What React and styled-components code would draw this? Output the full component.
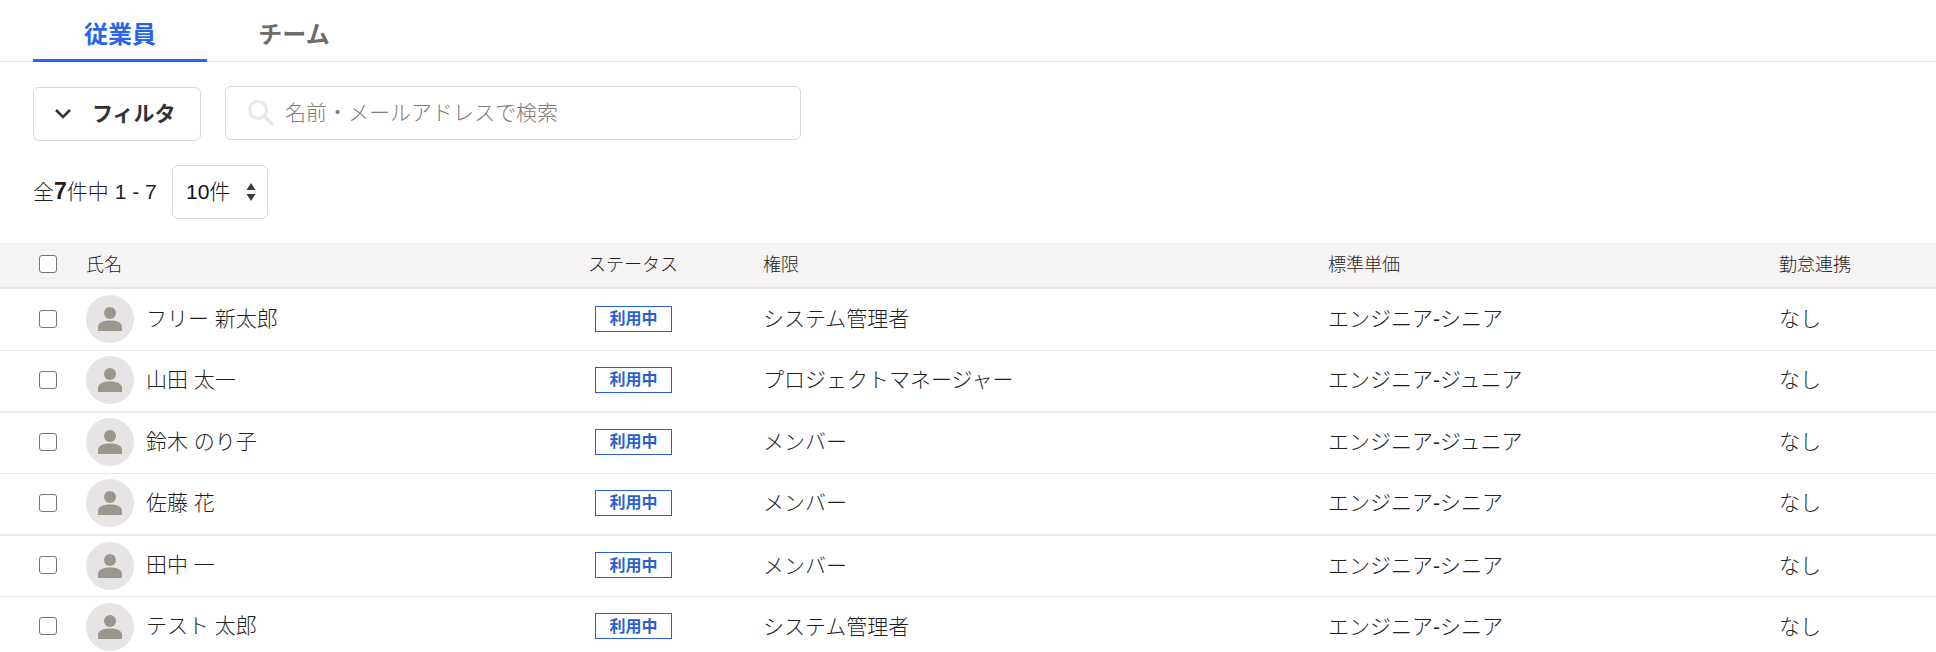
import React from "react";
import styled, { createGlobalStyle } from "styled-components";

const GlobalStyle = createGlobalStyle`
  html, body {
    margin: 0;
    background: #fff;
    overflow: hidden;
  }
  body {
    font-family: "Liberation Sans", "Noto Sans CJK JP", sans-serif;
    font-weight: 300;
    color: #1f1f1f;
  }
`;

const Page = styled.div`
  width: 1936px;
  height: 652px;
  overflow: hidden;
`;

const Tabs = styled.div`
  display: flex;
  height: 61px;
  padding-left: 33px;
  border-bottom: 1px solid #e5e5e5;
`;

const Tab = styled.div`
  width: 174px;
  height: 62px;
  box-sizing: border-box;
  padding-top: 19px;
  text-align: center;
  font-size: 24px;
  line-height: 32px;
  font-weight: 700;
  color: ${(p) => (p.$active ? "#2864f0" : "#6e6b6b")};
  border-bottom: ${(p) => (p.$active ? "3px solid #2864f0" : "none")};
`;

const Toolbar = styled.div`
  display: flex;
  align-items: flex-start;
  gap: 24px;
  padding: 25px 0 0 33px;
`;

const FilterButton = styled.div`
  display: flex;
  align-items: center;
  width: 168px;
  height: 54px;
  padding-left: 20px;
  box-sizing: border-box;
  border: 1px solid #d7d7d7;
  border-radius: 6px;
  font-size: 21px;
  font-weight: 700;
  color: #323232;
  gap: 20px;
`;

const SearchBox = styled.div`
  display: flex;
  align-items: center;
  width: 576px;
  height: 54px;
  margin-top: -1px;
  padding-left: 21px;
  box-sizing: border-box;
  border: 1px solid #d7d7d7;
  border-radius: 6px;
  font-size: 21px;
  color: #7f7c7c;
  gap: 10px;
`;

// CJK fallback sits low in the line box, this pulls the text back up
const Label = styled.span`
  padding-bottom: 4px;
`;

const CountRow = styled.div`
  display: flex;
  align-items: center;
  padding: 24px 0 0 33px;
  height: 54px;
`;

const CountText = styled.div`
  font-size: 21px;
  width: 139px;
  padding-bottom: 4px;
  white-space: nowrap;
  b {
    font-weight: 700;
    font-size: 23px;
  }
`;

const PerPage = styled.div`
  display: flex;
  align-items: center;
  justify-content: space-between;
  width: 96px;
  height: 54px;
  padding: 0 11px 0 13px;
  box-sizing: border-box;
  border: 1px solid #d7d7d7;
  border-radius: 6px;
  font-size: 21px;
  color: #111;
`;

const Table = styled.div`
  margin-top: 24px;
`;

const columns = "86px 418px 259px 565px 451px 157px";

const HeadRow = styled.div`
  display: grid;
  grid-template-columns: ${columns};
  align-items: center;
  height: 46.4px;
  box-sizing: border-box;
  background: #f5f3f4;
  border-bottom: 2px solid #e5e5e5;
  font-size: 18px;
`;

const Row = styled.div`
  display: grid;
  grid-template-columns: ${columns};
  align-items: center;
  height: 61.6px;
  box-sizing: border-box;
  border-bottom: 1px solid #e8e8e8;
  font-size: 21px;

  &:nth-child(odd) {
    border-bottom-width: 2px;
  }
`;

const Cell = styled.div`
  padding-bottom: 5px;
  white-space: nowrap;
`;

const CheckCell = styled.div`
  display: flex;
  justify-content: flex-start;
  padding: 0 0 2px 39px;
`;

const Check = styled.span`
  display: block;
  width: 18px;
  height: 18px;
  box-sizing: border-box;
  border: 1.5px solid #767676;
  border-radius: 3px;
  background: #fff;
`;

const StatusHead = styled(Cell)`
  padding-left: 84px;
`;

const NameCell = styled.div`
  display: flex;
  align-items: center;
  gap: 12px;
  padding-bottom: 1px;
`;

const NameText = styled.span`
  padding-bottom: 5px;
`;

const Avatar = styled.div`
  display: flex;
  align-items: center;
  justify-content: center;
  width: 48px;
  height: 48px;
  border-radius: 50%;
  background: #e6e4e4;
`;

const StatusCell = styled.div`
  padding: 0 0 2px 91px;
`;

const Badge = styled.span`
  display: flex;
  align-items: center;
  justify-content: center;
  width: 77px;
  height: 26px;
  padding-bottom: 3px;
  box-sizing: border-box;
  border: 1px solid #2b5fd0;
  font-size: 16px;
  font-weight: 700;
  color: #2b5fd0;
`;

const PersonIcon = () => (
  <svg width="24" height="26" viewBox="0 0 24 26">
    <circle cx="12" cy="7" r="6" fill="#9c978e" />
    <path d="M0 21c0-5 6-6.500 12-6.500S24 16 24 21v4H0z" fill="#9c978e" />
  </svg>
);

const employees = [
  { name: "フリー 新太郎", role: "システム管理者", rate: "エンジニア-シニア" },
  { name: "山田 太一", role: "プロジェクトマネージャー", rate: "エンジニア-ジュニア" },
  { name: "鈴木 のり子", role: "メンバー", rate: "エンジニア-ジュニア" },
  { name: "佐藤 花", role: "メンバー", rate: "エンジニア-シニア" },
  { name: "田中 一", role: "メンバー", rate: "エンジニア-シニア" },
  { name: "テスト 太郎", role: "システム管理者", rate: "エンジニア-シニア" },
];

const App = () => {
  return (
    <Page>
      <GlobalStyle />
      <Tabs>
        <Tab $active>従業員</Tab>
        <Tab>チーム</Tab>
      </Tabs>
      <Toolbar>
        <FilterButton>
          <svg width="18" height="12" viewBox="0 0 18 12">
            <path d="M2 2l7 7 7-7" fill="none" stroke="#323232" strokeWidth="2.600" />
          </svg>
          <Label>フィルタ</Label>
        </FilterButton>
        <SearchBox>
          <svg width="28" height="28" viewBox="0 0 28 28">
            <circle cx="11" cy="11" r="8.500" fill="none" stroke="#e8e8e8" strokeWidth="3" />
            <path d="M17 17l9 9" stroke="#e8e8e8" strokeWidth="3.500" />
          </svg>
          <Label>名前・メールアドレスで検索</Label>
        </SearchBox>
      </Toolbar>
      <CountRow>
        <CountText>
          全<b>7</b>件中 1 - 7
        </CountText>
        <PerPage>
          <Label>10件</Label>
          <svg width="10" height="18" viewBox="0 0 10 18">
            <path d="M5 0l4.500 7h-9zM5 18l-4.500-7h9z" fill="#3c3c3c" />
          </svg>
        </PerPage>
      </CountRow>
      <Table>
        <HeadRow>
          <CheckCell>
            <Check />
          </CheckCell>
          <Cell>氏名</Cell>
          <StatusHead>ステータス</StatusHead>
          <Cell>権限</Cell>
          <Cell>標準単価</Cell>
          <Cell>勤怠連携</Cell>
        </HeadRow>
        {employees.map(({ name, role, rate }) => (
          <Row key={name}>
            <CheckCell>
              <Check />
            </CheckCell>
            <NameCell>
              <Avatar>
                <PersonIcon />
              </Avatar>
              <NameText>{name}</NameText>
            </NameCell>
            <StatusCell>
              <Badge>利用中</Badge>
            </StatusCell>
            <Cell>{role}</Cell>
            <Cell>{rate}</Cell>
            <Cell>なし</Cell>
          </Row>
        ))}
      </Table>
    </Page>
  );
};

export default App;
